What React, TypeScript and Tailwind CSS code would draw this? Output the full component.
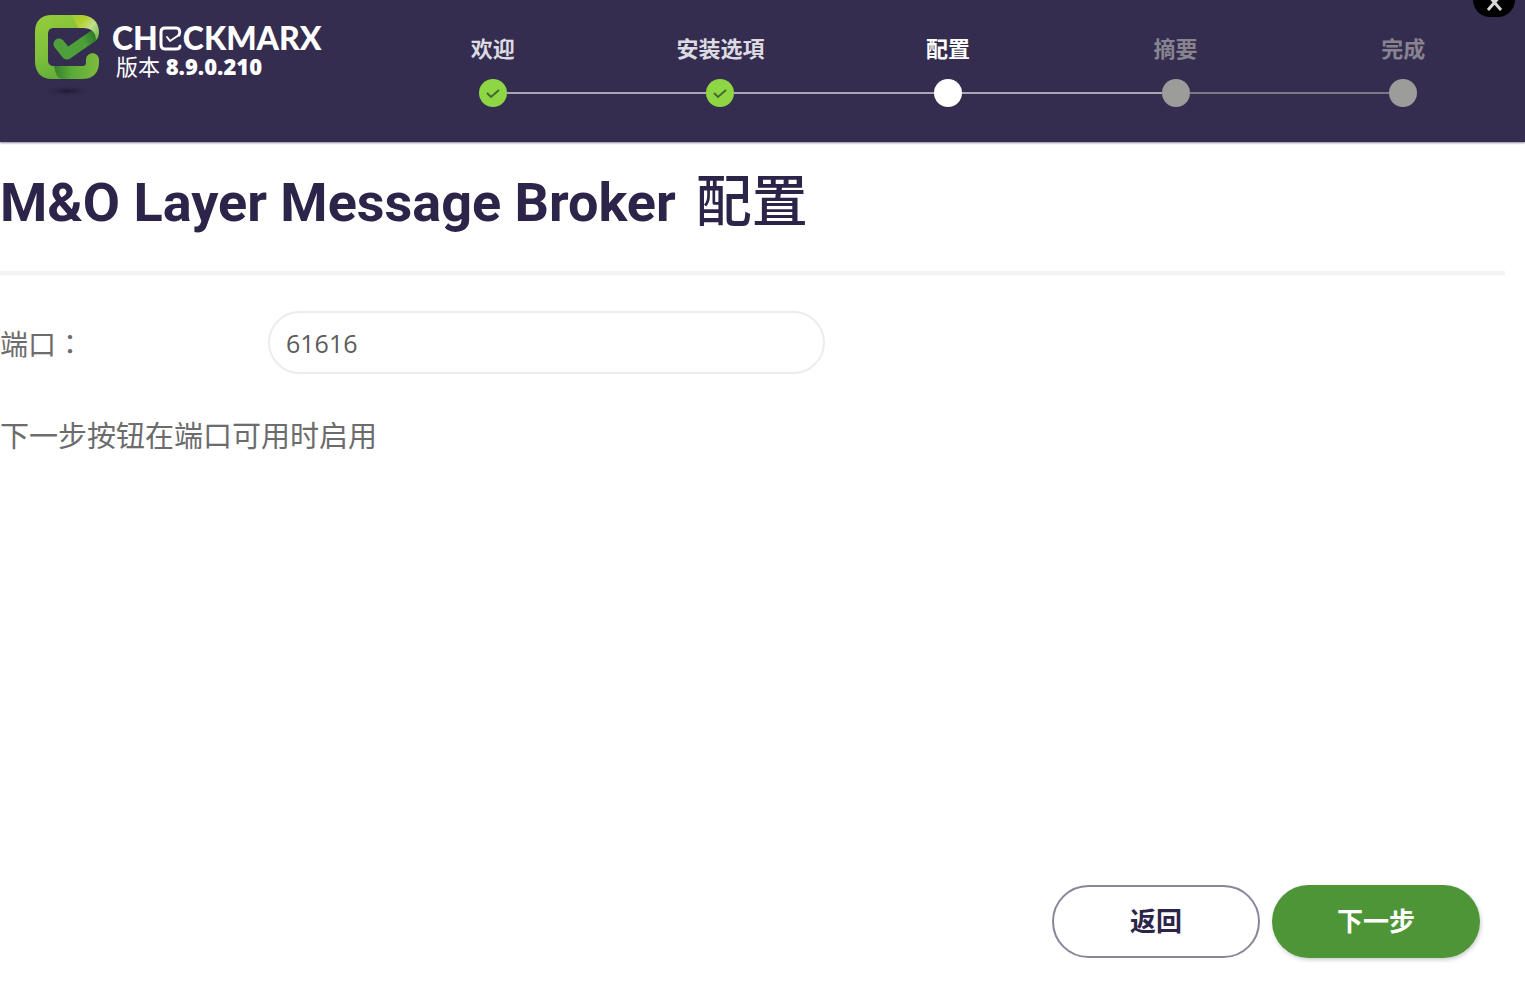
import { useState } from 'react'

const steps = [
  { label: '欢迎', state: 'done' },
  { label: '安装选項', state: 'done' },
  { label: '配置', state: 'current' },
  { label: '摘要', state: 'pending' },
  { label: '完成', state: 'pending' },
]

const dotStyles: Record<string, string> = {
  done: 'bg-[#8fd644]',
  current: 'bg-white',
  pending: 'bg-[#9c9c9b]',
}

const labelStyles: Record<string, string> = {
  done: 'text-[#dddbe2]',
  current: 'text-white',
  pending: 'text-[#87848f]',
}

function LogoMark() {
  return (
    <svg width="72" height="86" viewBox="0 0 72 86" fill="none" aria-hidden="true">
      <defs>
        <linearGradient id="frame" x1="10" y1="4" x2="40" y2="68" gradientUnits="userSpaceOnUse">
          <stop offset="0" stopColor="#93cb3b" />
          <stop offset="0.5" stopColor="#7fc03c" />
          <stop offset="1" stopColor="#5aa83a" />
        </linearGradient>
        <linearGradient id="base" x1="18" y1="0" x2="66" y2="0" gradientUnits="userSpaceOnUse">
          <stop offset="0" stopColor="#2c7428" />
          <stop offset="0.45" stopColor="#5aab38" />
          <stop offset="1" stopColor="#7cbb3c" />
        </linearGradient>
        <linearGradient id="fold" x1="40" y1="4" x2="68" y2="30" gradientUnits="userSpaceOnUse">
          <stop offset="0" stopColor="#9fcb36" />
          <stop offset="0.3" stopColor="#b4d030" />
          <stop offset="0.55" stopColor="#c0df8b" />
          <stop offset="1" stopColor="#5fae3a" />
        </linearGradient>
        <linearGradient id="tick" x1="22" y1="50" x2="66" y2="24" gradientUnits="userSpaceOnUse">
          <stop offset="0" stopColor="#4fa03a" />
          <stop offset="0.7" stopColor="#4d9f39" />
          <stop offset="1" stopColor="#2a7427" />
        </linearGradient>
        <radialGradient id="shadow">
          <stop offset="0" stopColor="#211a33" />
          <stop offset="1" stopColor="#352d4f" stopOpacity="0" />
        </radialGradient>
      </defs>
      <ellipse cx="35" cy="79" rx="29" ry="6" fill="url(#shadow)" />
      <path
        d="M18 54H50C53 54 54 53 54 50V48C54 39 67 39 67 48V50C67 61 61 67 50 67H18Z"
        fill="url(#base)"
      />
      <path
        d="M50 3H20C9 3 3 9 3 20V49C3 60 9 67 20 67H30C25 66 24 62 22 54C18 54 16 52 16 48V22C16 18 18 16 22 16H52Z"
        fill="url(#frame)"
      />
      <path d="M27 32L35 42L61 24" stroke="url(#tick)" strokeWidth="11" strokeLinecap="round" strokeLinejoin="round" />
      <path d="M40 3H48C60 3 67 10 67 20C67 23 66 26 64 28C64 20 59 16 51 16H46Z" fill="url(#fold)" />
    </svg>
  )
}

function CheckedE() {
  return (
    <svg width="25" height="25" viewBox="0 0 25 25" fill="none" stroke="white" aria-hidden="true">
      <path
        d="M21 9C23 5 21 2 18 2H7C4 2 3 4 3 6V18C3 21 4 23 7 23H18C20 23 22 22 22 20"
        strokeWidth="3"
        strokeLinecap="round"
      />
      <path d="M9 11L12 15L21 9" strokeWidth="2" strokeLinecap="round" strokeLinejoin="round" />
    </svg>
  )
}

function Stepper() {
  return (
    <ol className="grid flex-1 grid-cols-5 pt-[34px]">
      {steps.map((step, i) => (
        <li key={step.label} className="flex flex-col items-center gap-[17px]">
          <span className={`text-[22px] leading-7 font-bold ${labelStyles[step.state]}`}>{step.label}</span>
          <div className="flex w-full items-center">
            <span
              className={`h-[2px] flex-1 ${i === 0 ? 'bg-transparent' : i === 4 ? 'bg-[#7b7788]' : 'bg-[#aaa6b3]'}`}
            />
            <span className={`flex size-7 items-center justify-center rounded-full ${dotStyles[step.state]}`}>
              {step.state === 'done' && (
                <svg width="16" height="12" viewBox="0 0 16 12" fill="none" aria-hidden="true">
                  <path d="M2 6L6 10L14 3" stroke="#3f6b34" strokeWidth="2" />
                </svg>
              )}
            </span>
            <span
              className={`h-[2px] flex-1 ${i === 4 ? 'bg-transparent' : i === 3 ? 'bg-[#7b7788]' : 'bg-[#aaa6b3]'}`}
            />
          </div>
        </li>
      ))}
    </ol>
  )
}

export default function App() {
  const [port, setPort] = useState('61616')

  return (
    <div className="flex min-h-screen flex-col bg-white font-['Open_Sans','Noto_Sans_CJK_SC',sans-serif]">
      <header className="relative flex h-[142px] bg-[#352d4f] pr-2 shadow-[0_1px_2px_#8a8598]">
        <div className="flex w-[379px] shrink-0 items-start gap-2 pt-3 pl-8">
          <LogoMark />
          <div className="pt-3 text-white">
            <div className="flex items-center font-['Lato',sans-serif] text-[32px] leading-7 font-black">
              <span>CH</span>
              <CheckedE />
              <span>CKMARX</span>
            </div>
            <p className="pl-1 text-[22px] leading-7">
              版本 <span className="font-extrabold">8.9.0.210</span>
            </p>
          </div>
        </div>
        <Stepper />
        <button
          type="button"
          aria-label="关闭"
          className="absolute top-0 right-[10px] flex h-[17px] w-[42px] justify-center overflow-hidden rounded-b-[17px] bg-black"
        >
          <svg width="20" height="12" viewBox="0 0 20 12" fill="none" aria-hidden="true">
            <path d="M4 -5L17 10M17 -5L4 10" stroke="#d8d8d8" strokeWidth="3" />
          </svg>
        </button>
      </header>

      <main className="flex flex-1 flex-col">
        <h1 className="mr-5 flex items-baseline gap-5 border-b-4 border-[#f2f2f2] pt-4 pb-6 font-['Roboto','Noto_Sans_CJK_SC',sans-serif] text-[54px] leading-[88px] font-bold text-[#2d2549]">
          <span>M&amp;O Layer Message Broker</span>
          <span className="text-[56px] font-medium">配置</span>
        </h1>

        <form className="flex flex-1 flex-col" onSubmit={(e) => e.preventDefault()}>
          <div className="flex items-center pt-9">
            <label
              htmlFor="port"
              lang="zh-TW"
              className="w-[268px] font-['Noto_Sans_CJK_TC',sans-serif] text-[28px] leading-10 text-[#6c6c6c]"
            >
              端口：
            </label>
            <input
              id="port"
              value={port}
              onChange={(e) => setPort(e.target.value)}
              className="h-[63px] w-[557px] rounded-full border-2 border-[#ececec] px-4 text-[25px] text-[#5c5c5c] outline-none"
            />
          </div>
          <p className="pt-[42px] text-[29px] leading-10 text-[#6c6c6c]">下一步按钮在端口可用时启用</p>

          <div className="mt-auto flex justify-end gap-3 pr-[45px] pb-[50px] text-[26px] font-bold">
            <button type="button" className="h-[73px] w-52 rounded-full border-2 border-[#8a859b] bg-white text-[#2d2549]">
              返回
            </button>
            <button type="submit" className="h-[73px] w-52 rounded-full bg-[#4e9537] text-white shadow-[1px_2px_4px_rgba(0,0,0,0.2)]">
              下一步
            </button>
          </div>
        </form>
      </main>
    </div>
  )
}
